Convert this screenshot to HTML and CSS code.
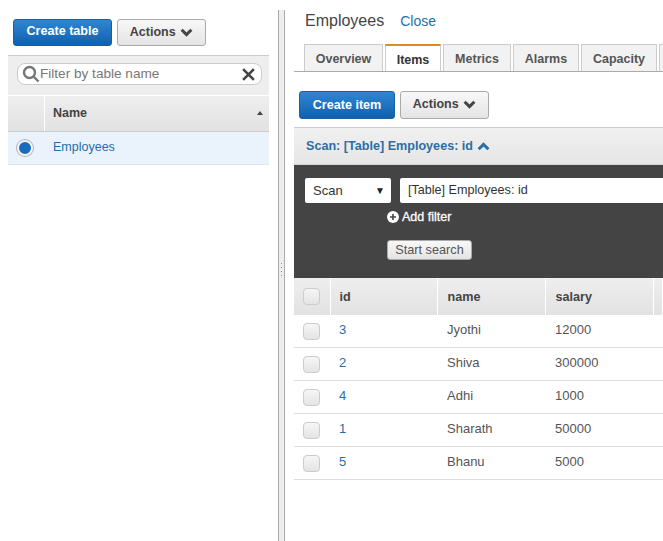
FILE: index.html
```html
<!DOCTYPE html>
<html lang="en">
<head>
  <meta charset="UTF-8">
  <meta name="viewport" content="width=device-width, initial-scale=1.0">
  <title>DynamoDB Tables</title>
  <link rel="stylesheet" href="styles.css">
</head>
<body>
  <div class="page">

    <!-- Table list -->
    <div class="sidebar">
      <div class="toolbar side-toolbar">
        <button class="btn btn-primary btn-table">Create table</button>
        <button class="btn btn-default btn-actions">Actions
          <svg class="chevron" viewBox="0 0 12 8"><path d="M1.5 1.5 6 6l4.500-4.500"/></svg>
        </button>
      </div>
      <div class="filter-band">
        <div class="filter">
          <svg class="search-icon" viewBox="0 0 18 18"><circle cx="7.500" cy="7.500" r="5.500"/><path d="m11.500 11.500 5 5"/></svg>
          <span class="filter-text">Filter by table name</span>
          <svg class="clear-icon" viewBox="0 0 12 12"><path d="m1 1 10 10M11 1 1 11"/></svg>
        </div>
      </div>
      <div class="side-head">
        <div class="side-head-check"></div>
        <div class="side-head-name">Name<span class="sort-arrow"></span></div>
      </div>
      <div class="side-row">
        <div class="side-radio"><span class="radio"></span></div>
        <a class="link">Employees</a>
      </div>
    </div>

    <!-- Drag handle -->
    <div class="divider"><span class="grip"></span></div>

    <!-- Table details -->
    <div class="details">
      <div class="title-row">
        <span class="title">Employees</span>
        <a class="link close-link">Close</a>
      </div>

      <div class="tabs">
        <div class="tab tab-overview">Overview</div>
        <div class="tab tab-active">Items</div>
        <div class="tab tab-metrics">Metrics</div>
        <div class="tab tab-alarms">Alarms</div>
        <div class="tab tab-capacity">Capacity</div>
        <div class="tab tab-more"></div>
      </div>

      <div class="toolbar item-toolbar">
        <button class="btn btn-primary btn-item">Create item</button>
        <button class="btn btn-default btn-actions">Actions
          <svg class="chevron" viewBox="0 0 12 8"><path d="M1.5 1.5 6 6l4.500-4.500"/></svg>
        </button>
      </div>

      <div class="scan-bar">
        <span>Scan: [Table] Employees: id</span>
        <svg class="chevron chevron-up" viewBox="0 0 12 8"><path d="M1.5 6.500 6 2l4.500 4.500"/></svg>
      </div>

      <div class="scan-panel">
        <div class="scan-fields">
          <div class="scan-select">Scan<span class="select-arrow">▼</span></div>
          <div class="scan-input">[Table] Employees: id</div>
        </div>
        <div class="add-filter">
          <svg class="plus-icon" viewBox="0 0 12 12"><circle cx="6" cy="6" r="6"/><path d="M6 3v6M3 6h6"/></svg>
          Add filter
        </div>
        <button class="btn-search">Start search</button>
      </div>

      <table class="items">
        <thead>
          <tr>
            <th class="col-check"><span class="check"></span></th>
            <th class="col-id">id</th>
            <th class="col-data">name</th>
            <th class="col-data">salary</th>
            <th class="col-rest"></th>
          </tr>
        </thead>
        <tbody>
          <tr><td class="col-check"><span class="check"></span></td><td class="col-id"><a class="link">3</a></td><td>Jyothi</td><td>12000</td><td></td></tr>
          <tr><td class="col-check"><span class="check"></span></td><td class="col-id"><a class="link">2</a></td><td>Shiva</td><td>300000</td><td></td></tr>
          <tr><td class="col-check"><span class="check"></span></td><td class="col-id"><a class="link">4</a></td><td>Adhi</td><td>1000</td><td></td></tr>
          <tr><td class="col-check"><span class="check"></span></td><td class="col-id"><a class="link">1</a></td><td>Sharath</td><td>50000</td><td></td></tr>
          <tr><td class="col-check"><span class="check"></span></td><td class="col-id"><a class="link">5</a></td><td>Bhanu</td><td>5000</td><td></td></tr>
        </tbody>
      </table>
    </div>
  </div>
</body>
</html>
```

FILE: styles.css
```css
/* Console layout */
body {
  font-family: "Liberation Sans", Arial, sans-serif;
  font-size: 13px;
  color: #444;
  background-color: #fff;
  margin: 0;
}

.page {
  display: flex;
  width: 663px;
  height: 541px;
  overflow: hidden;
}

.link {
  color: #1f6fa8;
}

/* Buttons */
.toolbar {
  display: flex;
  gap: 5px;
}

.btn {
  height: 27px;
  padding: 0 0 3px;
  border-radius: 3px;
  font-family: inherit;
  font-size: 12.6px;
  font-weight: bold;
  white-space: nowrap;
}

.btn-primary {
  color: #fff;
  background: linear-gradient(#2f86d2, #1061ae);
  border: 1px solid #15609f;
}

.btn-default {
  padding-bottom: 2px;
  color: #444;
  font-size: 12.5px;
  background: linear-gradient(#f8f8f8, #e4e4e4);
  border: 1px solid #aaa;
}

.btn-table {
  width: 99px;
}

.btn-item {
  width: 96px;
  height: 28px;
  padding-bottom: 1px;
}

.btn-actions {
  width: 89px;
}

.item-toolbar .btn-actions {
  height: 28px;
}

.chevron {
  width: 13px;
  height: 9px;
  margin: 0 0 -1px 1px;
  fill: none;
  stroke: #444;
  stroke-width: 2.8;
}

/* Table list */
.sidebar {
  width: 261px;
  margin-left: 8px;
  flex-shrink: 0;
}

.side-toolbar {
  margin: 19px 0 9px 5px;
}

.filter-band {
  height: 40px;
  padding: 7px 7px 0 9px;
  box-sizing: border-box;
  background-color: #eee;
  border-top: 1px solid #ccc;
}

.filter {
  display: flex;
  align-items: center;
  height: 20px;
  padding: 0 6px 0 4px;
  background: #fff;
  border: 1px solid #ccc;
  border-radius: 8px;
}

.search-icon {
  width: 18px;
  height: 18px;
  fill: none;
  stroke: #777;
  stroke-width: 2.4;
}

.filter-text {
  flex: 1;
  padding-bottom: 2px;
  font-size: 13.6px;
  color: #777;
}

.clear-icon {
  width: 13px;
  height: 13px;
  fill: none;
  stroke: #444;
  stroke-width: 2.4;
}

.side-head {
  display: flex;
  height: 37px;
  box-sizing: border-box;
  background: linear-gradient(#eee, #e2e2e2);
  border-top: 1px solid #fff;
  border-bottom: 1px solid #ccc;
}

.side-head-check {
  width: 36px;
  border-right: 1px solid #fff;
}

.side-head-name {
  flex: 1;
  display: flex;
  align-items: center;
  justify-content: space-between;
  padding: 0 6px 1px 8px;
  font-size: 12.5px;
  font-weight: bold;
}

.sort-arrow {
  border-left: 3px solid transparent;
  border-right: 3px solid transparent;
  border-bottom: 4px solid #444;
}

.side-row {
  display: flex;
  align-items: center;
  height: 33px;
  box-sizing: border-box;
  padding-bottom: 2px;
  font-size: 12.5px;
  background-color: #eaf3fb;
  border-bottom: 1px solid #dde6ee;
}

.side-radio {
  width: 45px;
  padding-left: 9px;
  box-sizing: border-box;
}

.radio {
  display: block;
  width: 12px;
  height: 12px;
  margin-top: 2px;
  background: #1b6cc0;
  border: 2px solid #f4f4f4;
  border-radius: 50%;
  box-shadow: 0 0 0 1px #b5b5b5;
}

/* Drag handle */
.divider {
  display: flex;
  align-items: center;
  justify-content: center;
  width: 5px;
  margin: 10px 9px 0 9px;
  padding-bottom: 10px;
  flex-shrink: 0;
  background-color: #eee;
  border-left: 1px solid #aaa;
  border-right: 1px solid #aaa;
}

.grip {
  width: 1px;
  height: 15px;
  background: repeating-linear-gradient(#888 0 1px, transparent 1px 4px);
}

/* Table details */
.details {
  flex: 1;
  min-width: 0;
}

.title-row {
  display: flex;
  align-items: baseline;
  gap: 16px;
  height: 44px;
  padding: 12px 0 0 11px;
  box-sizing: border-box;
  font-size: 14px;
}

.title {
  font-size: 16px;
}

.tabs {
  display: flex;
  gap: 2px;
  height: 28px;
  padding-left: 10px;
  box-sizing: border-box;
  border-bottom: 1px solid #aaa;
  overflow: hidden;
}

.tab {
  flex-shrink: 0;
  height: 27px;
  box-sizing: border-box;
  padding-top: 7px;
  text-align: center;
  font-size: 12.5px;
  font-weight: bold;
  color: #555;
  background-color: #f2f2f2;
  border: 1px solid #ccc;
  border-bottom: none;
}

.tab-overview { width: 79px; }
.tab-metrics { width: 68px; }
.tab-alarms { width: 66px; }
.tab-capacity { width: 76px; }
.tab-more { width: 30px; }

.tab-active {
  width: 56px;
  height: 28px;
  padding-top: 7px;
  color: #333;
  background-color: #fff;
  border-top: 2px solid #dd8a1e;
}

.item-toolbar {
  margin: 19px 0 8px 5px;
}

.scan-bar {
  display: flex;
  align-items: center;
  gap: 4px;
  height: 38px;
  box-sizing: border-box;
  padding-left: 12px;
  font-size: 12.6px;
  font-weight: bold;
  color: #2d6ea3;
  background: linear-gradient(#f0f0f0, #e6e6e6);
  border-top: 1px solid #ccc;
  border-bottom: 1px solid #d5d5d5;
}

.chevron-up {
  stroke: #2d6ea3;
  margin: 0;
}

.scan-panel {
  height: 113px;
  box-sizing: border-box;
  padding: 13px 0 0 11px;
  background-color: #444;
}

.scan-fields {
  display: flex;
  gap: 9px;
}

.scan-select {
  display: flex;
  justify-content: space-between;
  align-items: center;
  flex-shrink: 0;
  width: 86px;
  height: 25px;
  box-sizing: border-box;
  padding: 0 6px 0 8px;
  color: #333;
  background: #fff;
  border-radius: 2px;
}

.select-arrow {
  font-size: 10px;
  color: #222;
}

.scan-input {
  flex-shrink: 0;
  width: 300px;
  height: 25px;
  box-sizing: border-box;
  padding: 5px 8px;
  font-size: 12.6px;
  color: #333;
  background: #fff;
  border-radius: 2px;
}

.add-filter {
  display: flex;
  align-items: center;
  gap: 3px;
  margin: 6px 0 0 82px;
  height: 16px;
  font-size: 12.5px;
  color: #fff;
  -webkit-text-stroke: 0.3px #fff;
}

.plus-icon {
  width: 12px;
  height: 12px;
  fill: #fff;
  stroke: #444;
  stroke-width: 1.6;
}

.plus-icon circle {
  stroke: none;
}

.btn-search {
  display: block;
  width: 85px;
  height: 20px;
  margin: 15px 0 0 82px;
  padding: 0;
  font-family: inherit;
  font-size: 12.7px;
  color: #555;
  background: linear-gradient(#f8f8f8, #e4e4e4);
  border: 1px solid #aaa;
  border-radius: 3px;
}

/* Items table */
.items {
  width: 369px;
  table-layout: fixed;
  border-collapse: collapse;
}

.items th {
  height: 37px;
  padding: 0 9px 0 10px;
  text-align: left;
  font-size: 12.6px;
  background: linear-gradient(#eee, #e2e2e2);
  border-right: 1px solid #fff;
}

.items td {
  height: 33px;
  box-sizing: border-box;
  padding: 0 9px 2px 10px;
  color: #555;
  border-bottom: 1px solid #ddd;
}

.items tbody tr:first-child td {
  height: 32px;
}

.items .col-check {
  width: 36px;
  padding: 0 0 0 9px;
  box-sizing: border-box;
}

.items .col-id {
  width: 107px;
  padding-left: 9px;
  box-sizing: border-box;
}

.items .col-data {
  width: 108px;
  box-sizing: border-box;
}

.items td.col-check .check {
  margin-top: 2px;
}

.check {
  display: block;
  width: 15px;
  height: 15px;
  background: linear-gradient(#f6f6f6, #e4e4e4);
  border: 1px solid #ccc;
  border-radius: 4px;
}
```
